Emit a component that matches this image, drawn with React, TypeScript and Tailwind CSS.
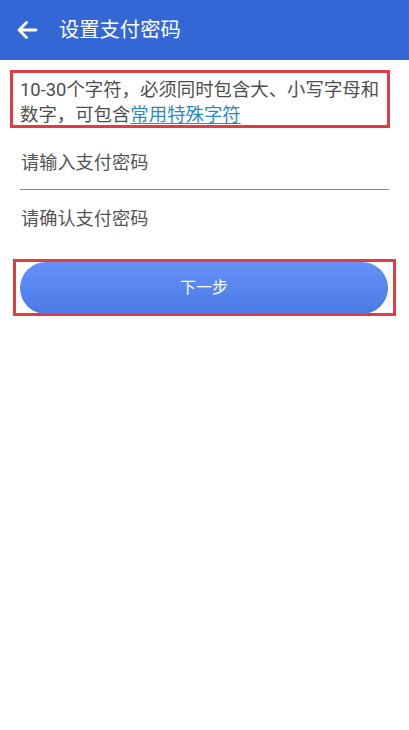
import React from "react";

const FONT = "font-['Roboto','Noto_Sans_CJK_SC',sans-serif]";

function BackArrow() {
  return (
    <svg width="22" height="20" viewBox="0 0 22 20" fill="none">
      <path
        d="M20 10H3M10.5 2.5L3 10l7.5 7.5"
        stroke="white"
        strokeWidth="2.8"
        strokeLinecap="round"
        strokeLinejoin="round"
      />
    </svg>
  );
}

export default function App() {
  return (
    <div className={`w-[409px] h-[730px] bg-white ${FONT}`}>
      {/* header */}
      <div className="h-[60px] bg-[#3467d6] flex items-center">
        <div className="ml-[16px] w-[22px] flex items-center">
          <BackArrow />
        </div>
        <h1 className="ml-[21px] text-[20.3px] text-white leading-none">设置支付密码</h1>
      </div>

      {/* hint */}
      <div className="mt-[10px] ml-[10px] w-[380px] h-[58px] border-[3px] border-[#e23b40] pl-[7px] pt-[4px]">
        <p className="text-[18.4px] leading-[25px] text-[#4e4e4e] whitespace-nowrap">
          10-30个字符，必须同时包含大、小写字母和
          <br />
          数字，可包含
          <a className="text-[#2a8db8] underline underline-offset-2">常用特殊字符</a>
        </p>
      </div>

      {/* inputs */}
      <div className="px-[20px]">
        <div className="mt-[8px] h-[54px] flex items-center border-b border-[#8a8a8a]">
          <span className="pl-[1px] text-[18.2px] text-[#555]">请输入支付密码</span>
        </div>
        <div className="h-[58px] flex items-center">
          <span className="pl-[1px] text-[18.2px] text-[#555]">请确认支付密码</span>
        </div>
      </div>

      {/* next button */}
      <div className="mt-[11px] ml-[13px] w-[383px] h-[57px] border-[3px] border-[#e23b40] pl-[4px]">
        <button className="w-[368px] h-[52px] rounded-full bg-gradient-to-b from-[#6591f7] to-[#4b7ae6] text-white text-[16px] flex items-center justify-center">
          下一步
        </button>
      </div>
    </div>
  );
}
